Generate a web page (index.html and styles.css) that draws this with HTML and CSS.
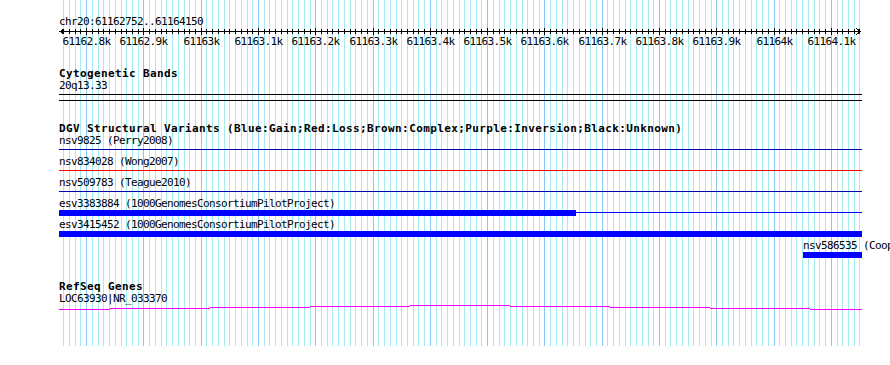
FILE: index.html
```html
<!DOCTYPE html>
<html>
<head>
<meta charset="utf-8">
<link rel="stylesheet" href="styles.css">
</head>
<body>
<div class="panel">
  <svg class="grid" width="890" height="346" viewBox="0 0 890 346">
    <path class="grid-minor" d="M63.5 0V346M69.5 0V346M75.5 0V346M80.5 0V346M92.5 0V346M98.5 0V346M103.5 0V346M109.5 0V346M115.5 0V346M121.5 0V346M126.5 0V346M132.5 0V346M138.5 0V346M149.5 0V346M155.5 0V346M161.5 0V346M166.5 0V346M172.5 0V346M178.5 0V346M184.5 0V346M189.5 0V346M195.5 0V346M206.5 0V346M212.5 0V346M218.5 0V346M224.5 0V346M229.5 0V346M235.5 0V346M241.5 0V346M247.5 0V346M252.5 0V346M264.5 0V346M269.5 0V346M275.5 0V346M281.5 0V346M287.5 0V346M292.5 0V346M298.5 0V346M304.5 0V346M310.5 0V346M321.5 0V346M327.5 0V346M332.5 0V346M338.5 0V346M344.5 0V346M350.5 0V346M355.5 0V346M361.5 0V346M367.5 0V346M378.5 0V346M384.5 0V346M390.5 0V346M396.5 0V346M401.5 0V346M407.5 0V346M413.5 0V346M418.5 0V346M424.5 0V346M436.5 0V346M441.5 0V346M447.5 0V346M453.5 0V346M459.5 0V346M464.5 0V346M470.5 0V346M476.5 0V346M481.5 0V346M493.5 0V346M499.5 0V346M504.5 0V346M510.5 0V346M516.5 0V346M522.5 0V346M527.5 0V346M533.5 0V346M539.5 0V346M550.5 0V346M556.5 0V346M562.5 0V346M567.5 0V346M573.5 0V346M579.5 0V346M585.5 0V346M590.5 0V346M596.5 0V346M607.5 0V346M613.5 0V346M619.5 0V346M625.5 0V346M630.5 0V346M636.5 0V346M642.5 0V346M648.5 0V346M653.5 0V346M665.5 0V346M670.5 0V346M676.5 0V346M682.5 0V346M688.5 0V346M693.5 0V346M699.5 0V346M705.5 0V346M711.5 0V346M722.5 0V346M728.5 0V346M733.5 0V346M739.5 0V346M745.5 0V346M751.5 0V346M756.5 0V346M762.5 0V346M768.5 0V346M779.5 0V346M785.5 0V346M791.5 0V346M796.5 0V346M802.5 0V346M808.5 0V346M814.5 0V346M819.5 0V346M825.5 0V346M837.5 0V346M842.5 0V346M848.5 0V346M854.5 0V346M859.5 0V346"/>
    <path class="grid-major" d="M86.5 0V346M143.5 0V346M201.5 0V346M258.5 0V346M315.5 0V346M373.5 0V346M430.5 0V346M487.5 0V346M544.5 0V346M602.5 0V346M659.5 0V346M716.5 0V346M774.5 0V346M831.5 0V346"/>
  </svg>

  <div class="content">
    <div class="chrom">chr20:61162752..61164150</div>
    <svg class="ruler" width="890" height="20" viewBox="0 0 890 20">
      <path class="axis" d="M59 3.5H861"/>
      <path class="axis" d="M64.5 0.5L60.5 3.5L64.5 6.5"/>
      <path class="axis" d="M856.5 0.5L860.5 3.5L856.5 6.5"/>
      <path class="axis" d="M63.5 1V6M69.5 1V6M75.5 1V6M80.5 1V6M92.5 1V6M98.5 1V6M103.5 1V6M109.5 1V6M115.5 1V6M121.5 1V6M126.5 1V6M132.5 1V6M138.5 1V6M149.5 1V6M155.5 1V6M161.5 1V6M166.5 1V6M172.5 1V6M178.5 1V6M184.5 1V6M189.5 1V6M195.5 1V6M206.5 1V6M212.5 1V6M218.5 1V6M224.5 1V6M229.5 1V6M235.5 1V6M241.5 1V6M247.5 1V6M252.5 1V6M264.5 1V6M269.5 1V6M275.5 1V6M281.5 1V6M287.5 1V6M292.5 1V6M298.5 1V6M304.5 1V6M310.5 1V6M321.5 1V6M327.5 1V6M332.5 1V6M338.5 1V6M344.5 1V6M350.5 1V6M355.5 1V6M361.5 1V6M367.5 1V6M378.5 1V6M384.5 1V6M390.5 1V6M396.5 1V6M401.5 1V6M407.5 1V6M413.5 1V6M418.5 1V6M424.5 1V6M436.5 1V6M441.5 1V6M447.5 1V6M453.5 1V6M459.5 1V6M464.5 1V6M470.5 1V6M476.5 1V6M481.5 1V6M493.5 1V6M499.5 1V6M504.5 1V6M510.5 1V6M516.5 1V6M522.5 1V6M527.5 1V6M533.5 1V6M539.5 1V6M550.5 1V6M556.5 1V6M562.5 1V6M567.5 1V6M573.5 1V6M579.5 1V6M585.5 1V6M590.5 1V6M596.5 1V6M607.5 1V6M613.5 1V6M619.5 1V6M625.5 1V6M630.5 1V6M636.5 1V6M642.5 1V6M648.5 1V6M653.5 1V6M665.5 1V6M670.5 1V6M676.5 1V6M682.5 1V6M688.5 1V6M693.5 1V6M699.5 1V6M705.5 1V6M711.5 1V6M722.5 1V6M728.5 1V6M733.5 1V6M739.5 1V6M745.5 1V6M751.5 1V6M756.5 1V6M762.5 1V6M768.5 1V6M779.5 1V6M785.5 1V6M791.5 1V6M796.5 1V6M802.5 1V6M808.5 1V6M814.5 1V6M819.5 1V6M825.5 1V6M837.5 1V6M842.5 1V6M848.5 1V6M854.5 1V6M859.5 1V6"/>
      <path class="axis" d="M86.5 0V7M143.5 0V7M201.5 0V7M258.5 0V7M315.5 0V7M373.5 0V7M430.5 0V7M487.5 0V7M544.5 0V7M602.5 0V7M659.5 0V7M716.5 0V7M774.5 0V7M831.5 0V7"/>
      <text x="86.5" y="17">61162.8k</text>
      <text x="143.5" y="17">61162.9k</text>
      <text x="201.5" y="17">61163k</text>
      <text x="258.5" y="17">61163.1k</text>
      <text x="315.5" y="17">61163.2k</text>
      <text x="373.5" y="17">61163.3k</text>
      <text x="430.5" y="17">61163.4k</text>
      <text x="487.5" y="17">61163.5k</text>
      <text x="544.5" y="17">61163.6k</text>
      <text x="602.5" y="17">61163.7k</text>
      <text x="659.5" y="17">61163.8k</text>
      <text x="716.5" y="17">61163.9k</text>
      <text x="774.5" y="17">61164k</text>
      <text x="831.5" y="17">61164.1k</text>
    </svg>

    <section class="track track-cyto">
      <div class="track-title">Cytogenetic Bands</div>
      <div class="flabel">20q13.33</div>
      <div class="band"></div>
    </section>

    <section class="track track-dgv">
      <div class="track-title">DGV Structural Variants (Blue:Gain;Red:Loss;Brown:Complex;Purple:Inversion;Black:Unknown)</div>
      <div class="row">
        <div class="flabel">nsv9825 (Perry2008)</div>
        <div class="geom"><div class="line gain"></div></div>
      </div>
      <div class="row">
        <div class="flabel">nsv834028 (Wong2007)</div>
        <div class="geom"><div class="line loss"></div></div>
      </div>
      <div class="row">
        <div class="flabel">nsv509783 (Teague2010)</div>
        <div class="geom"><div class="line gain"></div></div>
      </div>
      <div class="row">
        <div class="flabel">esv3383884 (1000GenomesConsortiumPilotProject)</div>
        <div class="geom"><div class="bar" style="width:517px"></div><div class="line thin"></div></div>
      </div>
      <div class="row">
        <div class="flabel">esv3415452 (1000GenomesConsortiumPilotProject)</div>
        <div class="geom"><div class="bar" style="width:803px"></div></div>
      </div>
      <div class="row">
        <div class="flabel" style="margin-left:744px">nsv586535 (Cooper2011)</div>
        <div class="geom"><div class="bar" style="margin-left:744px;width:59px"></div></div>
      </div>
    </section>

    <section class="track track-refseq">
      <div class="track-title">RefSeq Genes</div>
      <div class="flabel">LOC63930|NR_033370</div>
    </section>
    <svg class="gene" width="890" height="6" viewBox="0 0 890 6">
      <path d="M59 4.5H110M110 3.5H210M210 2.5H310M310 1.5H410M410 0.5H510M510 1.5H610M610 2.5H710M710 3.5H810M810 4.5H862"/>
    </svg>
  </div>
</div>
</body>
</html>
```

FILE: styles.css
```css
* {
  box-sizing: border-box;
}

html,
body {
  margin: 0;
  padding: 0;
  background: #ffffff;
}

body {
  width: 890px;
  height: 365px;
  overflow: hidden;
  font-family: "DejaVu Sans Mono", "Liberation Mono", monospace;
  font-size: 11px;
  letter-spacing: -0.62px;
  color: #000000;
}

.panel {
  position: relative;
  width: 890px;
  height: 365px;
}

.grid {
  position: absolute;
  left: 0;
  top: 0;
  shape-rendering: crispEdges;
}

.grid path {
  fill: none;
  stroke-width: 1;
}

.grid-minor {
  stroke: #a4ecf0;
}

.grid-major {
  stroke: #88c8f0;
}

.content {
  position: relative;
}

.chrom {
  height: 28px;
  padding: 15px 0 0 59px;
  line-height: 13px;
  white-space: nowrap;
}

.ruler {
  display: block;
  shape-rendering: crispEdges;
}

.ruler .axis {
  fill: none;
  stroke: #000000;
  stroke-width: 1;
}

.ruler text {
  font-family: "DejaVu Sans Mono", "Liberation Mono", monospace;
  font-size: 11px;
  letter-spacing: -0.62px;
  fill: #000000;
  text-anchor: middle;
}

.track {
  margin-left: 59px;
  width: 803px;
}

.track-title {
  height: 13px;
  line-height: 13px;
  font-weight: bold;
  letter-spacing: 0.38px;
  white-space: nowrap;
}

.flabel {
  height: 12px;
  line-height: 12px;
  white-space: nowrap;
}

.track-cyto {
  margin-top: 19px;
}

.band {
  margin-top: 2px;
  height: 7px;
  border-top: 1px solid #000000;
  border-bottom: 1px solid #000000;
}

.track-dgv {
  margin-top: 21px;
}

.row {
  height: 21px;
}

.geom {
  display: flex;
  align-items: flex-start;
  height: 9px;
}

.line {
  flex: 1;
  height: 1px;
  margin-top: 2px;
}

.line.gain {
  background: #0000aa;
}

.line.loss {
  background: #ff0000;
}

.line.thin {
  background: #0000ff;
}

.bar {
  flex: none;
  height: 6px;
  background: #0000ff;
}

.track-refseq {
  margin-top: 20px;
}

.track-refseq .track-title {
  height: 12px;
  line-height: 12px;
}

.gene {
  display: block;
  shape-rendering: crispEdges;
}

.gene path {
  fill: none;
  stroke: #ff00ff;
  stroke-width: 1;
}
```
